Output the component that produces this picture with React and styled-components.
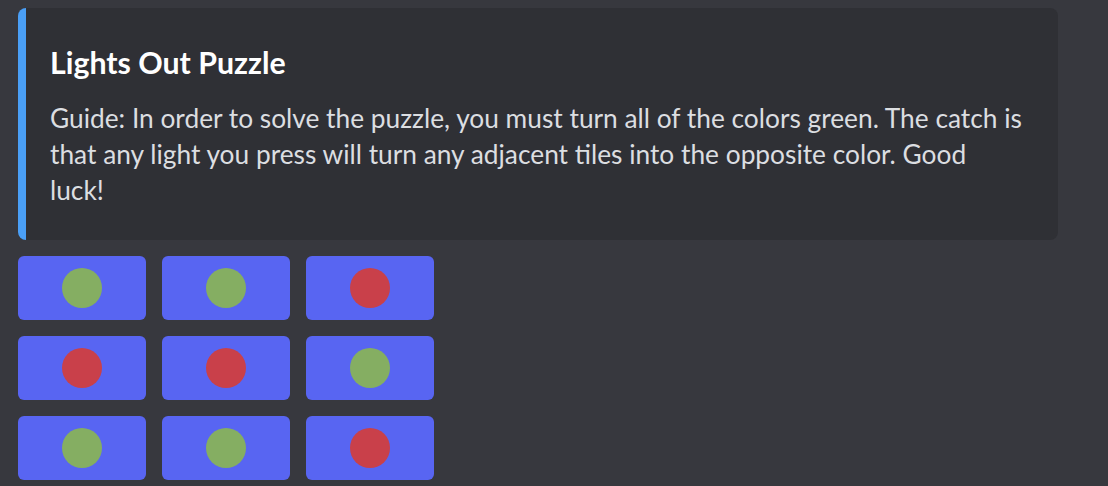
import React from "react";
import styled, { createGlobalStyle } from "styled-components";

const GlobalStyle = createGlobalStyle`
  body {
    margin: 0;
    background: #37383e;
    font-family: Lato, "Noto Sans", sans-serif;
  }
`;

const Page = styled.div`
  padding: 8px 18px;
  display: flex;
  flex-direction: column;
  gap: 16px;
`;

const Embed = styled.div`
  width: 1040px;
  box-sizing: border-box;
  background: #2f3035;
  border-left: 8px solid #4a9ff6;
  border-radius: 8px;
  padding: 16px 32px 32px 24px;
`;

const Title = styled.div`
  margin-top: 16px;
  color: #ffffff;
  font-size: 30.3px;
  font-weight: 700;
  line-height: 44px;
`;

const Description = styled.div`
  margin-top: 16px;
  color: #dcdee1;
  font-size: 26.3px;
  line-height: 36px;
`;

const Board = styled.div`
  display: grid;
  grid-template-columns: repeat(3, 128px);
  gap: 16px;
`;

const Tile = styled.button`
  width: 128px;
  height: 64px;
  border: none;
  border-radius: 6px;
  background: #5865f2;
  display: flex;
  align-items: center;
  justify-content: center;
  padding: 0;
  cursor: pointer;
`;

const Light = styled.span`
  width: 40px;
  height: 40px;
  border-radius: 50%;
  background: ${(p) => (p.$on ? "#85ae62" : "#c9404a")};
`;

const lights = [
  true, true, false,
  false, false, true,
  true, true, false,
];

export default function App() {
  return (
    <>
      <GlobalStyle />
      <Page>
        <Embed>
          <Title>Lights Out Puzzle</Title>
          <Description>
            Guide: In order to solve the puzzle, you must turn all of the colors
            green. The catch is that any light you press will turn any adjacent
            tiles into the opposite color. Good luck!
          </Description>
        </Embed>
        <Board>
          {lights.map((on, i) => (
            <Tile key={i}>
              <Light $on={on} />
            </Tile>
          ))}
        </Board>
      </Page>
    </>
  );
}
